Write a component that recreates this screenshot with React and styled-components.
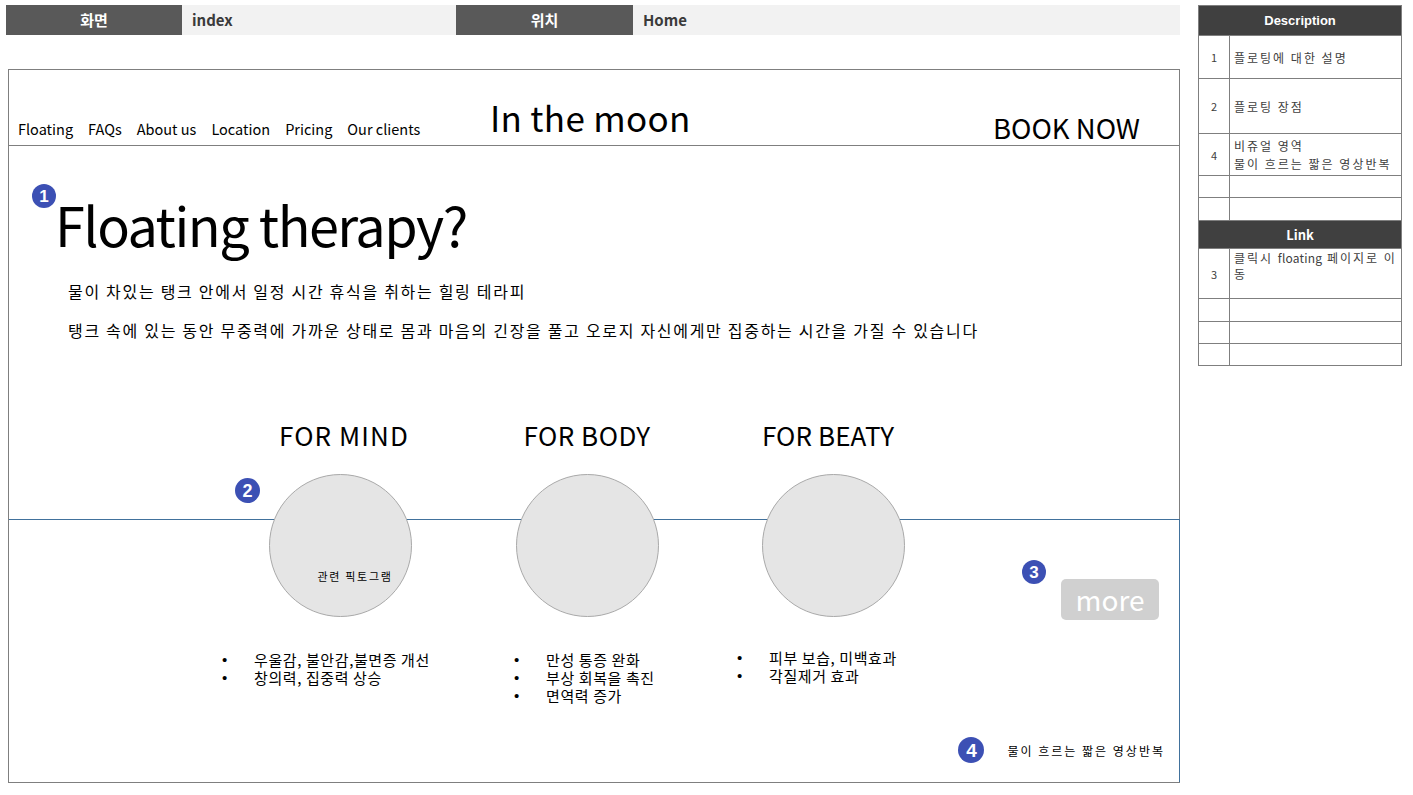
import React from "react";
import styled, { createGlobalStyle } from "styled-components";

const GlobalStyle = createGlobalStyle`
  html, body { margin: 0; padding: 0; background: #ffffff; }
  body {
    font-family: "Noto Sans CJK KR", "Noto Sans", sans-serif;
    color: #000;
  }
  * { box-sizing: border-box; }
`;

const Page = styled.div`
  display: flex;
  align-items: flex-start;
  padding-top: 5px;
  width: 1413px;
  height: 795px;
  overflow: hidden;
`;

const LeftColumn = styled.div`
  margin-left: 6px;
  width: 1174px;
  display: flex;
  flex-direction: column;
`;

const TopBar = styled.div`
  display: grid;
  grid-template-columns: 176px 274px 177px 1fr;
  height: 30px;
`;

const BarLabel = styled.div`
  background: #595959;
  color: #ffffff;
  font-weight: 700;
  font-size: 15px;
  display: flex;
  align-items: center;
  justify-content: center;
  padding-bottom: 2px;
`;

const BarValue = styled.div`
  background: #f2f2f2;
  color: #3a3a3a;
  font-weight: 700;
  font-size: 15px;
  display: flex;
  align-items: center;
  padding: 0 0 2px 10px;
`;

const Frame = styled.div`
  margin-top: 34px;
  margin-left: 2px;
  width: 1172px;
  height: 714px;
  border: 1px solid #7f7f7f;
  display: flex;
  flex-direction: column;
`;

const SiteHeader = styled.header`
  flex: none;
  height: 76px;
  border-bottom: 1px solid #7f7f7f;
  display: grid;
  grid-template-columns: 472px auto 1fr;
  align-items: end;
  padding: 0 39px 0 9px;
`;

const Nav = styled.nav`
  display: flex;
  gap: 15px;
  font-size: 14.5px;
  line-height: 20px;
  margin-bottom: 6px;
`;

const NavItem = styled.span`
  color: #000;
`;

const Brand = styled.div`
  font-size: 35px;
  line-height: 40px;
  letter-spacing: 0.3px;
  margin-bottom: 8px;
`;

const BookNow = styled.div`
  justify-self: end;
  font-size: 27.5px;
  line-height: 30px;
  margin-bottom: 3px;
`;

const Body = styled.div`
  flex: 1;
  display: grid;
  grid-template-columns: 1fr;
  grid-template-rows: 373px 1fr;
`;

const Hero = styled.section`
  grid-row: 1;
  grid-column: 1;
  padding: 38px 0 0 23px;
`;

const TitleRow = styled.div`
  display: flex;
  align-items: flex-start;
`;

const Badge = styled.span`
  flex: none;
  width: ${(p) => p.$size || 24}px;
  height: ${(p) => p.$size || 24}px;
  border-radius: 50%;
  background: #3c50b4;
  color: #ffffff;
  font-family: "Liberation Sans", Arial, sans-serif;
  font-weight: 700;
  font-size: ${(p) => Math.round((p.$size || 24) * 0.72)}px;
  line-height: 1;
  display: inline-flex;
  align-items: center;
  justify-content: center;
`;

const Title = styled.h1`
  margin: 12px 0 0 -1px;
  font-size: 54px;
  line-height: 56px;
  letter-spacing: -1.5px;
  font-weight: 400;
`;

const Intro = styled.div`
  margin: 29px 0 0 36px;
  display: flex;
  flex-direction: column;
  gap: 19px;
`;

const IntroLine = styled.p`
  margin: 0;
  font-size: 16px;
  line-height: 20px;
  letter-spacing: 1.7px;
`;

const VideoArea = styled.div`
  grid-row: 2;
  grid-column: 1;
  margin-right: -1px;
  border-top: 1px solid #41719c;
  border-right: 1px solid #41719c;
  display: flex;
  flex-direction: column;
  align-items: flex-end;
  padding: 40px 14px 19px 0;
`;

const MoreRow = styled.div`
  display: flex;
  align-items: flex-start;
  gap: 15px;
  margin-right: 6px;
`;

const MoreButton = styled.div`
  margin-top: 19px;
  width: 98px;
  height: 41px;
  border-radius: 5px;
  background: #d0d0d0;
  color: #ffffff;
  font-size: 28px;
  line-height: 41px;
  text-align: center;
`;

const CaptionRow = styled.div`
  margin-top: auto;
  display: flex;
  align-items: center;
  gap: 23px;
`;

const Caption = styled.span`
  font-size: 12px;
  letter-spacing: 2px;
  line-height: 18px;
  margin-top: 2px;
`;

const Features = styled.section`
  grid-row: 1 / 3;
  grid-column: 1;
  align-self: start;
  position: relative;
  z-index: 1;
  margin-top: 273px;
  padding-left: 209px;
  display: grid;
  grid-template-columns: repeat(3, 246px);
`;

const FeatureColumn = styled.div`
  position: relative;
  display: flex;
  flex-direction: column;
  align-items: center;
`;

const FeatureHeading = styled.h2`
  margin: 0;
  font-size: 26px;
  line-height: 32px;
  font-weight: 400;
  letter-spacing: ${(p) => p.$ls}px;
  transform: translateX(${(p) => p.$shift || 0}px);
`;

const Circle = styled.div`
  margin-top: 23px;
  width: 143px;
  height: 143px;
  border-radius: 50%;
  background: #e5e5e5;
  border: 1px solid #a9a9a9;
  transform: translateX(${(p) => p.$shift || 0}px);
  padding: 87px 0 0 48px;
`;

const CircleLabel = styled.span`
  font-size: 11px;
  line-height: 18px;
  letter-spacing: 1.7px;
  white-space: nowrap;
`;

const FloatingBadge = styled(Badge)`
  position: absolute;
  left: ${(p) => p.$left}px;
  top: ${(p) => p.$top}px;
`;

const BulletList = styled.ul`
  align-self: flex-start;
  list-style: none;
  margin: ${(p) => 34 + (p.$mt || 0)}px 0 0 ${(p) => p.$offset}px;
  padding: 0;
  font-size: 15px;
  line-height: 18px;
  letter-spacing: 0.6px;
`;

const BulletItem = styled.li`
  display: flex;
  white-space: nowrap;
`;

const Bullet = styled.span`
  width: 32px;
  flex: none;
  font-family: "Liberation Sans", Arial, sans-serif;
  font-size: 15px;
  margin-left: -1px;
`;

const SidePanel = styled.table`
  margin-left: 18px;
  width: 203px;
  border-collapse: collapse;
  table-layout: fixed;
  font-size: 12px;
  color: #404040;
`;

const NumCol = styled.col`
  width: 31px;
`;

const TextCol = styled.col`
  width: 172px;
`;

const Row = styled.tr`
  height: ${(p) => p.$h}px;
`;

const HeadCell = styled.th`
  background: #404040;
  color: #ffffff;
  border: 1px solid #7f7f7f;
  padding: 0;
  font-size: 13px;
  font-weight: 700;
  font-family: ${(p) =>
    p.$latin
      ? '"Liberation Sans", Arial, sans-serif'
      : '"Noto Sans CJK KR", sans-serif'};
`;

const NumCell = styled.td`
  border: 1px solid #7f7f7f;
  text-align: center;
  vertical-align: middle;
  padding: 0;
  font-size: 11px;
`;

const TextCell = styled.td`
  border: 1px solid #7f7f7f;
  padding: ${(p) => (p.$top ? "1px" : "0")} 0 0 4px;
  vertical-align: ${(p) => (p.$top ? "top" : "middle")};
  letter-spacing: 2px;
  line-height: ${(p) => p.$lh || 17}px;
  white-space: nowrap;
  overflow: hidden;
`;

const LatinRun = styled.span`
  letter-spacing: 0.2px;
`;

const navItems = ["Floating", "FAQs", "About us", "Location", "Pricing", "Our clients"];

const features = [
  {
    title: "FOR MIND",
    ls: 1.1,
    headShift: 3,
    circleShift: -1,
    label: "관련 픽토그램",
    badge: true,
    offset: 5,
    mt: 0,
    items: ["우울감, 불안감,불면증 개선", "창의력, 집중력 상승"],
  },
  {
    title: "FOR BODY",
    ls: 0.5,
    headShift: 0,
    circleShift: 0,
    offset: 51,
    mt: 0,
    items: ["만성 통증 완화", "부상 회복을 촉진", "면역력 증가"],
  },
  {
    title: "FOR BEATY",
    ls: 0.1,
    headShift: -5,
    circleShift: 0,
    offset: 28,
    mt: -2,
    items: ["피부 보습, 미백효과", "각질제거 효과"],
  },
];

export default function App() {
  return (
    <>
      <GlobalStyle />
      <Page>
        <LeftColumn>
          <TopBar>
            <BarLabel>화면</BarLabel>
            <BarValue>index</BarValue>
            <BarLabel>위치</BarLabel>
            <BarValue>Home</BarValue>
          </TopBar>

          <Frame>
            <SiteHeader>
              <Nav>
                {navItems.map((n) => (
                  <NavItem key={n}>{n}</NavItem>
                ))}
              </Nav>
              <Brand>In the moon</Brand>
              <BookNow>BOOK NOW</BookNow>
            </SiteHeader>

            <Body>
              <Hero>
                <TitleRow>
                  <Badge $size={24}>1</Badge>
                  <Title>Floating therapy?</Title>
                </TitleRow>
                <Intro>
                  <IntroLine>물이 차있는 탱크 안에서 일정 시간 휴식을 취하는 힐링 테라피</IntroLine>
                  <IntroLine>
                    탱크 속에 있는 동안 무중력에 가까운 상태로 몸과 마음의 긴장을 풀고 오로지 자신에게만 집중하는 시간을 가질 수 있습니다
                  </IntroLine>
                </Intro>
              </Hero>

              <VideoArea>
                <MoreRow>
                  <Badge $size={24}>3</Badge>
                  <MoreButton>more</MoreButton>
                </MoreRow>
                <CaptionRow>
                  <Badge $size={26}>4</Badge>
                  <Caption>물이 흐르는 짧은 영상반복</Caption>
                </CaptionRow>
              </VideoArea>

              <Features>
                {features.map((f) => (
                  <FeatureColumn key={f.title}>
                    <FeatureHeading $ls={f.ls} $shift={f.headShift}>
                      {f.title}
                    </FeatureHeading>
                    {f.badge && (
                      <FloatingBadge $size={25} $left={17} $top={59}>
                        2
                      </FloatingBadge>
                    )}
                    <Circle $shift={f.circleShift}>
                      {f.label && <CircleLabel>{f.label}</CircleLabel>}
                    </Circle>
                    <BulletList $offset={f.offset} $mt={f.mt}>
                      {f.items.map((it) => (
                        <BulletItem key={it}>
                          <Bullet>•</Bullet>
                          {it}
                        </BulletItem>
                      ))}
                    </BulletList>
                  </FeatureColumn>
                ))}
              </Features>
            </Body>
          </Frame>
        </LeftColumn>

        <SidePanel>
          <colgroup>
            <NumCol />
            <TextCol />
          </colgroup>
          <tbody>
            <Row $h={30}>
              <HeadCell colSpan={2} $latin>
                Description
              </HeadCell>
            </Row>
            <Row $h={43}>
              <NumCell>1</NumCell>
              <TextCell>플로팅에 대한 설명</TextCell>
            </Row>
            <Row $h={55}>
              <NumCell>2</NumCell>
              <TextCell>플로팅 장점</TextCell>
            </Row>
            <Row $h={42}>
              <NumCell>4</NumCell>
              <TextCell $lh={18}>
                비쥬얼 영역
                <br />
                물이 흐르는 짧은 영상반복
              </TextCell>
            </Row>
            <Row $h={22}>
              <NumCell />
              <TextCell />
            </Row>
            <Row $h={23}>
              <NumCell />
              <TextCell />
            </Row>
            <Row $h={28}>
              <HeadCell colSpan={2}>Link</HeadCell>
            </Row>
            <Row $h={50}>
              <NumCell>3</NumCell>
              <TextCell $top $lh={16}>
                클릭시 <LatinRun>floating</LatinRun> 페이지로 이
                <br />
                동
              </TextCell>
            </Row>
            <Row $h={23}>
              <NumCell />
              <TextCell />
            </Row>
            <Row $h={22}>
              <NumCell />
              <TextCell />
            </Row>
            <Row $h={22}>
              <NumCell />
              <TextCell />
            </Row>
          </tbody>
        </SidePanel>
      </Page>
    </>
  );
}
